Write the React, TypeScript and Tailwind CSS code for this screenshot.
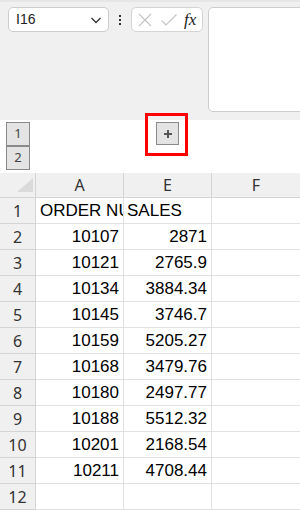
import React from "react";

const rows: [string, string, string][] = [
  ["1", "ORDER NUMBER", "SALES"],
  ["2", "10107", "2871"],
  ["3", "10121", "2765.9"],
  ["4", "10134", "3884.34"],
  ["5", "10145", "3746.7"],
  ["6", "10159", "5205.27"],
  ["7", "10168", "3479.76"],
  ["8", "10180", "2497.77"],
  ["9", "10188", "5512.32"],
  ["10", "10201", "2168.54"],
  ["11", "10211", "4708.44"],
  ["12", "", ""],
];

const cellFont = { fontFamily: '"Liberation Sans", Arial, sans-serif' };
const uiFont = { fontFamily: '"Noto Sans", "Open Sans", sans-serif' };

export default function App() {
  return (
    <div className="w-[300px] h-[510px] overflow-hidden bg-white relative">
      {/* top ribbon area */}
      <div className="h-[120px] bg-[#f0f0f0] relative">
        <div className="h-[2px] bg-[#e6e6e6]" />
        <div className="flex pt-[5px] pl-[8px]">
          <div className="w-[101px] h-[25px] bg-white border border-[#cdcdcd] rounded-[5px] flex items-center justify-between pl-[7px] pr-[5px]">
            <span className="text-[14px] text-[#222]" style={cellFont}>I16</span>
            <svg width="14" height="14" viewBox="0 0 14 14">
              <path d="M2.5 5 L7 9.5 L11.5 5" fill="none" stroke="#333" strokeWidth="1.3" />
            </svg>
          </div>
          <div className="w-[22px] flex flex-col items-center pt-[8px] gap-[2px]">
            <div className="w-[2px] h-[2px] bg-[#333]" />
            <div className="w-[2px] h-[2px] bg-[#333]" />
            <div className="w-[2px] h-[2px] bg-[#333]" />
          </div>
          <div className="w-[72px] h-[25px] bg-white border border-[#d4d4d4] rounded-[5px] flex items-center pl-[4px]">
            <svg width="16" height="16" viewBox="0 0 16 16" className="ml-[1px]">
              <path d="M2 2 L14 14 M14 2 L2 14" stroke="#c4c4c4" strokeWidth="1.2" fill="none" />
            </svg>
            <svg width="18" height="16" viewBox="0 0 18 16" className="ml-[7px]">
              <path d="M1.5 8.5 L6 13 L16.5 2.5" stroke="#c4c4c4" strokeWidth="1.2" fill="none" />
            </svg>
            <span
              className="ml-[6px] text-[17px] italic text-[#222] leading-none"
              style={{ fontFamily: '"Liberation Serif", "Times New Roman", serif' }}
            >
              fx
            </span>
          </div>
          <div className="ml-[5px] flex-1 h-[105px] bg-white border border-[#cdcdcd] rounded-[5px] mr-[-6px]" />
        </div>
      </div>

      {/* outline area */}
      <div className="h-[53px] bg-white flex">
        <div className="w-[36px] flex flex-col pt-[2px] pl-[6px]">
          <div
            className="w-[24px] h-[24px] border border-[#8a8a8a] bg-[#e4e4e4] flex items-center justify-center text-[13px] text-[#444]"
            style={uiFont}
          >
            1
          </div>
          <div
            className="w-[24px] h-[24px] border border-[#8a8a8a] bg-[#e4e4e4] flex items-center justify-center text-[13px] text-[#444]"
            style={uiFont}
          >
            2
          </div>
        </div>
        <div className="pl-[120px] pt-[2px]">
          <div className="w-[23px] h-[23px] border border-[#8a8a8a] bg-[#e4e4e4] flex items-center justify-center">
            <svg width="10" height="10" viewBox="0 0 10 10">
              <path d="M5 1 V9 M1 5 H9" stroke="#555" strokeWidth="2" />
            </svg>
          </div>
        </div>
      </div>

      {/* red annotation */}
      <div className="absolute left-[145px] top-[113px] w-[43px] h-[43px] border-[3px] border-[#ff0000]" />

      {/* grid */}
      <div className="grid grid-cols-[36px_88px_88px_88px] grid-rows-[25px_repeat(12,26px)]">
        <div className="bg-[#f0f0f0] border-r border-b border-[#d4d4d4] relative">
          <svg width="36" height="25" viewBox="0 0 36 25" className="absolute left-0 top-0">
            <path d="M33 5 L33 19 L17 19 Z" fill="#dadada" />
          </svg>
        </div>
        {["A", "E", "F"].map((c, i) => (
          <div
            key={c}
            className={`bg-[#f0f0f0] border-b border-[#d4d4d4] flex items-center justify-center text-[16px] text-[#333] ${
              i < 2 ? "border-r" : ""
            }`}
            style={uiFont}
          >
            {c}
          </div>
        ))}
        {rows.map(([n, a, e]) => (
          <React.Fragment key={n}>
            <div
              className="bg-[#f0f0f0] border-r border-b border-[#d4d4d4] flex items-center justify-center text-[16px] text-[#333]"
              style={uiFont}
            >
              {n}
            </div>
            <div
              className={`border-r border-b border-[#e1e1e1] flex items-center overflow-hidden whitespace-nowrap text-[17px] text-black ${
                n === "1" ? "justify-start pl-[4px]" : "justify-end pr-[4px]"
              }`}
              style={cellFont}
            >
              {a}
            </div>
            <div
              className={`border-r border-b border-[#e1e1e1] flex items-center overflow-hidden whitespace-nowrap text-[17px] text-black ${
                n === "1" ? "justify-start pl-[3px]" : "justify-end pr-[4px]"
              }`}
              style={cellFont}
            >
              {e}
            </div>
            <div className="border-b border-[#e1e1e1]" />
          </React.Fragment>
        ))}
      </div>
    </div>
  );
}
